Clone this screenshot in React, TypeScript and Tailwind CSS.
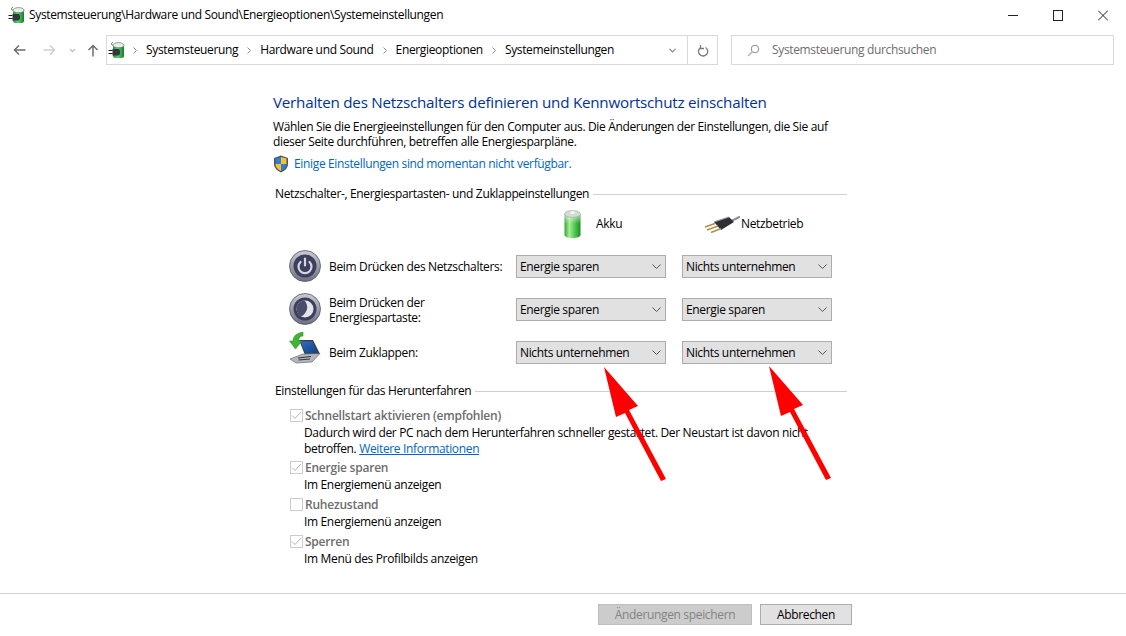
import { ChevronDown } from "lucide-react";

const font = "font-['Open_Sans','Noto_Sans',sans-serif] text-[12px] leading-[16px] tracking-[-0.345px]";

function PowerOptionsIcon() {
  return (
    <svg width="17" height="18" viewBox="0 0 17 18" className="shrink-0">
      <defs>
        <linearGradient id="bat" x1="0" x2="1" y1="0" y2="0">
          <stop offset="0" stopColor="#159a33" />
          <stop offset="0.45" stopColor="#5fd06a" />
          <stop offset="1" stopColor="#0f7d2a" />
        </linearGradient>
      </defs>
      <path d="M5 1.5C3 1.5 3 3.5 5 4.5" fill="none" stroke="#5a5a5a" strokeWidth="1" />
      <rect x="5" y="4" width="11" height="13" rx="2.5" fill="url(#bat)" />
      <ellipse cx="10.5" cy="4.2" rx="5.5" ry="2.6" fill="#e8efe8" stroke="#5d7a62" strokeWidth="0.7" />
      <path d="M4.5 8H11L12 10V13L10.5 14.5H4.5Z" fill="#34373c" />
      <path d="M0.5 9.5H4.5M0.5 12.5H4.5" stroke="#1e1e1e" strokeWidth="1.2" />
    </svg>
  );
}

function Arrow({ className }: { className: string }) {
  return (
    <svg width="64" height="116" viewBox="0 0 64 116" className={`absolute ${className}`}>
      <polygon points="1,1 35,40 26,44 63,113 58,115 22,47 13,51" fill="#ff0000" />
    </svg>
  );
}

function SelectBox({ value }: { value: string }) {
  return (
    <div className="flex h-[23px] w-[150px] items-center justify-between border border-[#adadad] bg-[#e1e1e1] pl-[3px] pr-[3px] text-black">
      <span>{value}</span>
      <svg width="9" height="5" viewBox="0 0 9 5" className="mr-[1px]">
        <path d="M0.5 0.5 L4.5 4.5 L8.5 0.5" fill="none" stroke="#555555" strokeWidth="1" />
      </svg>
    </div>
  );
}

function RoundIcon({ moon }: { moon?: boolean }) {
  const id = moon ? "ringMoon" : "ringPower";
  return (
    <svg width="32" height="32" viewBox="0 0 32 32">
      <defs>
        <linearGradient id={id} x1="0" x2="0" y1="0" y2="1">
          <stop offset="0" stopColor="#c9cbd4" />
          <stop offset="1" stopColor="#6d7080" />
        </linearGradient>
      </defs>
      <circle cx="16" cy="16" r="15.5" fill={`url(#${id})`} stroke="#55586a" strokeWidth="0.8" />
      <circle cx="16" cy="16" r="11.5" fill="#3d3f5c" />
      {moon ? (
        <>
          <circle cx="16" cy="16" r="8.5" fill="#e4e6ec" />
          <path d="M11 9.2 A8.5 8.5 0 0 0 12 23.5 A11 11 0 0 0 18 16 A10 10 0 0 0 15.5 7.5 A8.5 8.5 0 0 0 11 9.2Z" fill="#4a4c68" />
        </>
      ) : (
        <g fill="none" stroke="#d4d6e2" strokeWidth="2.2" strokeLinecap="round">
          <path d="M11.5 12 A6.5 6.5 0 1 0 20.5 12" />
          <path d="M16 8.5 V15.5" />
        </g>
      )}
    </svg>
  );
}

function LidIcon() {
  return (
    <svg width="32" height="32" viewBox="0 0 32 32" className="-translate-y-[4px]">
      <defs>
        <linearGradient id="lid" x1="0" x2="1" y1="0" y2="1">
          <stop offset="0" stopColor="#2f6fbe" />
          <stop offset="1" stopColor="#123f86" />
        </linearGradient>
      </defs>
      <polygon points="10,8 24,8 31,22 16,23" fill="#3a3d44" />
      <polygon points="11.5,9.3 23.3,9.3 28.8,20.8 16.5,21.6" fill="url(#lid)" />
      <polygon points="1,27 14,22 31,21.5 23,30 7,31" fill="#b4b7bc" stroke="#55585e" strokeWidth="0.6" />
      <path d="M9 26 L22 24.5 M9.5 28 L21 27" stroke="#34363b" strokeWidth="1.2" />
      <path d="M0.5 9H4C4 4 8 1 14 0V4C11 4 9.5 6 9.5 9H13L6.5 17Z" fill="#3fb534" stroke="#22801e" strokeWidth="0.5" />
    </svg>
  );
}

function SettingRow({ icon, label, first, second }: { icon: React.ReactNode; label: React.ReactNode; first: string; second: string }) {
  return (
    <div className="flex h-[43px] items-center pl-[16px]">
      <div className="flex w-[40px] -translate-y-[1px] items-center">{icon}</div>
      <div className="w-[187px] leading-[15px]">{label}</div>
      <div className="flex gap-[16px]">
        <SelectBox value={first} />
        <SelectBox value={second} />
      </div>
    </div>
  );
}

function Check({ title, checked, children, className }: { title: string; checked?: boolean; children: React.ReactNode; className?: string }) {
  return (
    <div className={className}>
      <div className="flex h-[17px] items-center pl-[17px]">
        <span className="mr-[2px] flex size-[13px] items-center justify-center border border-[#cccccc] bg-white">
          {checked && (
            <svg width="11" height="9" viewBox="0 0 11 9">
              <path d="M1 4.5 L4 7.5 L10 1" fill="none" stroke="#b5b5b5" strokeWidth="1" />
            </svg>
          )}
        </span>
        <span className="font-semibold tracking-[-0.23px] text-[#6d6d6d]">{title}</span>
      </div>
      <div className="pl-[31px] pt-px leading-[16px]">{children}</div>
    </div>
  );
}

function SectionTitle({ children }: { children: string }) {
  return (
    <div className="ml-[2px] flex w-[572px] items-center gap-[4px]">
      <span className="whitespace-nowrap">{children}</span>
      <span className="h-px flex-1 bg-[#cfcfcf]" />
    </div>
  );
}

export default function App() {
  return (
    <div className={`relative flex h-[636px] w-[1126px] flex-col overflow-hidden bg-white text-black ${font}`}>
      <div className="flex h-[30px] shrink-0 items-center pl-[8px]">
        <PowerOptionsIcon />
        <span className="ml-[4px]">Systemsteuerung\Hardware und Sound\Energieoptionen\Systemeinstellungen</span>
        <div className="ml-auto flex items-center gap-[35px] pr-[18px]">
          <svg width="10" height="11" viewBox="0 0 10 11"><path d="M0 5.5H10" stroke="#222" /></svg>
          <svg width="10" height="11" viewBox="0 0 10 11"><rect x="0.5" y="0.5" width="9" height="10" fill="none" stroke="#222" /></svg>
          <svg width="10" height="11" viewBox="0 0 10 11"><path d="M0 0.5L10 10.5M10 0.5L0 10.5" stroke="#222" /></svg>
        </div>
      </div>

      <div className="mt-[5px] flex h-[30px] shrink-0 items-center pl-[13px]">
        <svg width="13" height="12" viewBox="0 0 13 12" className="mr-[17px]"><path d="M12.5 6H1.5M6 1.5L1.5 6L6 10.5" fill="none" stroke="#6e6e6e" strokeWidth="1.5" /></svg>
        <svg width="13" height="12" viewBox="0 0 13 12" className="mr-[12px]"><path d="M0.5 6H11.5M7 1.5L11.5 6L7 10.5" fill="none" stroke="#cfcfcf" strokeWidth="1.5" /></svg>
        <ChevronDown size={9} strokeWidth={3} className="mr-[10px] text-[#b5b5b5]" />
        <svg width="12" height="13" viewBox="0 0 12 13" className="mr-[7px]"><path d="M6 12.5V1.5M1.5 6L6 1.5L10.5 6" fill="none" stroke="#6e6e6e" strokeWidth="1.5" /></svg>
        <div className="flex h-full w-[612px] items-center border border-[#d9d9d9]">
          <div className="ml-[1px]"><PowerOptionsIcon /></div>
          {["Systemsteuerung", "Hardware und Sound", "Energieoptionen", "Systemeinstellungen"].map((crumb, i) => (
            <div key={crumb} className="flex items-center">
              <svg width="4" height="7" viewBox="0 0 4 7" className={i === 0 ? "ml-[8px] mr-[9px]" : "mx-[9px]"}><path d="M0.5 0.5L3.5 3.5L0.5 6.5" fill="none" stroke="#8a8a8a" /></svg>
              <span>{crumb}</span>
            </div>
          ))}
          <ChevronDown size={11} strokeWidth={2.5} className="ml-auto mr-[9px] text-[#808080]" />
          <div className="flex h-full w-[30px] items-center justify-center border-l border-[#d9d9d9]">
            <svg width="12" height="13" viewBox="0 0 12 13"><path d="M3 4A4.6 4.6 0 1 0 8.5 3.5M3.5 1V4.5H7" fill="none" stroke="#7a7a7a" strokeWidth="1.3" /></svg>
          </div>
        </div>
        <div className="ml-[13px] flex h-full w-[383px] items-center border border-[#d9d9d9] pl-[15px] text-[#6d6d6d]">
          <svg width="13" height="13" viewBox="0 0 13 13" className="mr-[12px]"><circle cx="8" cy="5" r="3.8" fill="none" stroke="#8d8d8d" /><path d="M5.2 7.8L1 12" stroke="#c9a27e" strokeWidth="1.1" /></svg>
          Systemsteuerung durchsuchen
        </div>
      </div>

      <main className="flex-1 pl-[273px]">
        <h1 className="mt-[27px] text-[15.2px] leading-[20px] tracking-[-0.23px] text-[#003399]">Verhalten des Netzschalters definieren und Kennwortschutz einschalten</h1>
        <p className="mt-[7px] w-[570px] leading-[15px]">
          Wählen Sie die Energieeinstellungen für den Computer aus. Die Änderungen der Einstellungen, die Sie auf dieser Seite durchführen, betreffen alle Energiesparpläne.
        </p>
        <div className="mt-[7px] flex h-[16px] items-center text-[#0066cc]">
          <svg width="16" height="18" viewBox="0 0 16 18" className="mr-[5px]">
            <path d="M8 0.5L15 3V9C15 13 11.5 16 8 17.5C4.5 16 1 13 1 9V3Z" fill="#4a5560" />
            <path d="M8 2L8 9H2.5V3.6Z" fill="#2f7fd8" />
            <path d="M8 2L13.5 3.6V9H8Z" fill="#f6c32c" />
            <path d="M2.5 9H8V16C5 14.7 2.5 12.5 2.5 9Z" fill="#f6c32c" />
            <path d="M8 9H13.5C13.5 12.5 11 14.7 8 16Z" fill="#2f7fd8" />
          </svg>
          Einige Einstellungen sind momentan nicht verfügbar.
        </div>

        <div className="mt-[14px]"><SectionTitle>Netzschalter-, Energiespartasten- und Zuklappeinstellungen</SectionTitle></div>

        <div className="mt-[6px] flex h-[32px] items-center pl-[291px]">
          <svg width="17" height="28" viewBox="0 0 17 28" className="mr-[15px]">
            <defs>
              <linearGradient id="akku" x1="0" x2="1" y1="0" y2="0">
                <stop offset="0" stopColor="#2ea52f" />
                <stop offset="0.3" stopColor="#a6ec98" />
                <stop offset="0.7" stopColor="#46c044" />
                <stop offset="1" stopColor="#1c8a28" />
              </linearGradient>
              <linearGradient id="akkuFade" x1="0" x2="0" y1="0" y2="1">
                <stop offset="0" stopColor="#ffffff" stopOpacity="0.65" />
                <stop offset="0.4" stopColor="#ffffff" stopOpacity="0" />
              </linearGradient>
            </defs>
            <path d="M0.5 4V25C0.5 26.8 4 28 8.5 28S16.5 26.8 16.5 25V4Z" fill="url(#akku)" />
            <path d="M0.5 4V25C0.5 26.8 4 28 8.5 28S16.5 26.8 16.5 25V4Z" fill="url(#akkuFade)" />
            <ellipse cx="8.5" cy="4" rx="8" ry="3.4" fill="#d4dcd6" stroke="#8ba08e" strokeWidth="0.5" />
            <ellipse cx="8.5" cy="2.6" rx="2.6" ry="1.4" fill="#f4f6f4" />
          </svg>
          <span className="w-[107px]">Akku</span>
          <svg width="37" height="17" viewBox="0 0 37 17" className="mr-[1px]">
            <path d="M26 6C30 4 33 3 37 0.5" stroke="#8a8d92" strokeWidth="2" fill="none" />
            <polygon points="11,6 26,1 31,6 18,14" fill="#2e3036" />
            <path d="M11 6L26 1" stroke="#8f949c" strokeWidth="1.2" />
            <path d="M12 7.5L2 11M15 10L4 14M18 12.5L8 16.5" stroke="#b28f4a" strokeWidth="1.6" />
          </svg>
          <span>Netzbetrieb</span>
        </div>

        <div className="mt-[5px]">
          <SettingRow icon={<RoundIcon />} label="Beim Drücken des Netzschalters:" first="Energie sparen" second="Nichts unternehmen" />
          <SettingRow icon={<RoundIcon moon />} label={<>Beim Drücken der<br />Energiespartaste:</>} first="Energie sparen" second="Energie sparen" />
          <SettingRow icon={<LidIcon />} label="Beim Zuklappen:" first="Nichts unternehmen" second="Nichts unternehmen" />
        </div>

        <div className="mt-[9px]"><SectionTitle>Einstellungen für das Herunterfahren</SectionTitle></div>

        <Check className="mt-[8px]" title="Schnellstart aktivieren (empfohlen)" checked>
          <p className="w-[510px]">
            Dadurch wird der PC nach dem Herunterfahren schneller gestartet. Der Neustart ist davon nicht betroffen. <span className="text-[#0066cc] underline">Weitere Informationen</span>
          </p>
        </Check>
        <Check className="mt-[2px]" title="Energie sparen" checked>Im Energiemenü anzeigen</Check>
        <Check className="mt-[3px]" title="Ruhezustand">Im Energiemenü anzeigen</Check>
        <Check className="mt-[3px]" title="Sperren" checked>Im Menü des Profilbilds anzeigen</Check>
      </main>

      <footer className="flex h-[43px] shrink-0 items-start gap-[8px] border-t border-[#cfcfcf] pl-[598px] pt-[10px]">
        <div className="flex h-[21px] w-[154px] items-center justify-center border border-[#bfbfbf] bg-[#cccccc] text-[#838383]">Änderungen speichern</div>
        <div className="flex h-[21px] w-[92px] items-center justify-center border border-[#adadad] bg-[#e1e1e1]">Abbrechen</div>
      </footer>

      <Arrow className="left-[603px] top-[366px]" />
      <Arrow className="left-[768px] top-[365px]" />
    </div>
  );
}
